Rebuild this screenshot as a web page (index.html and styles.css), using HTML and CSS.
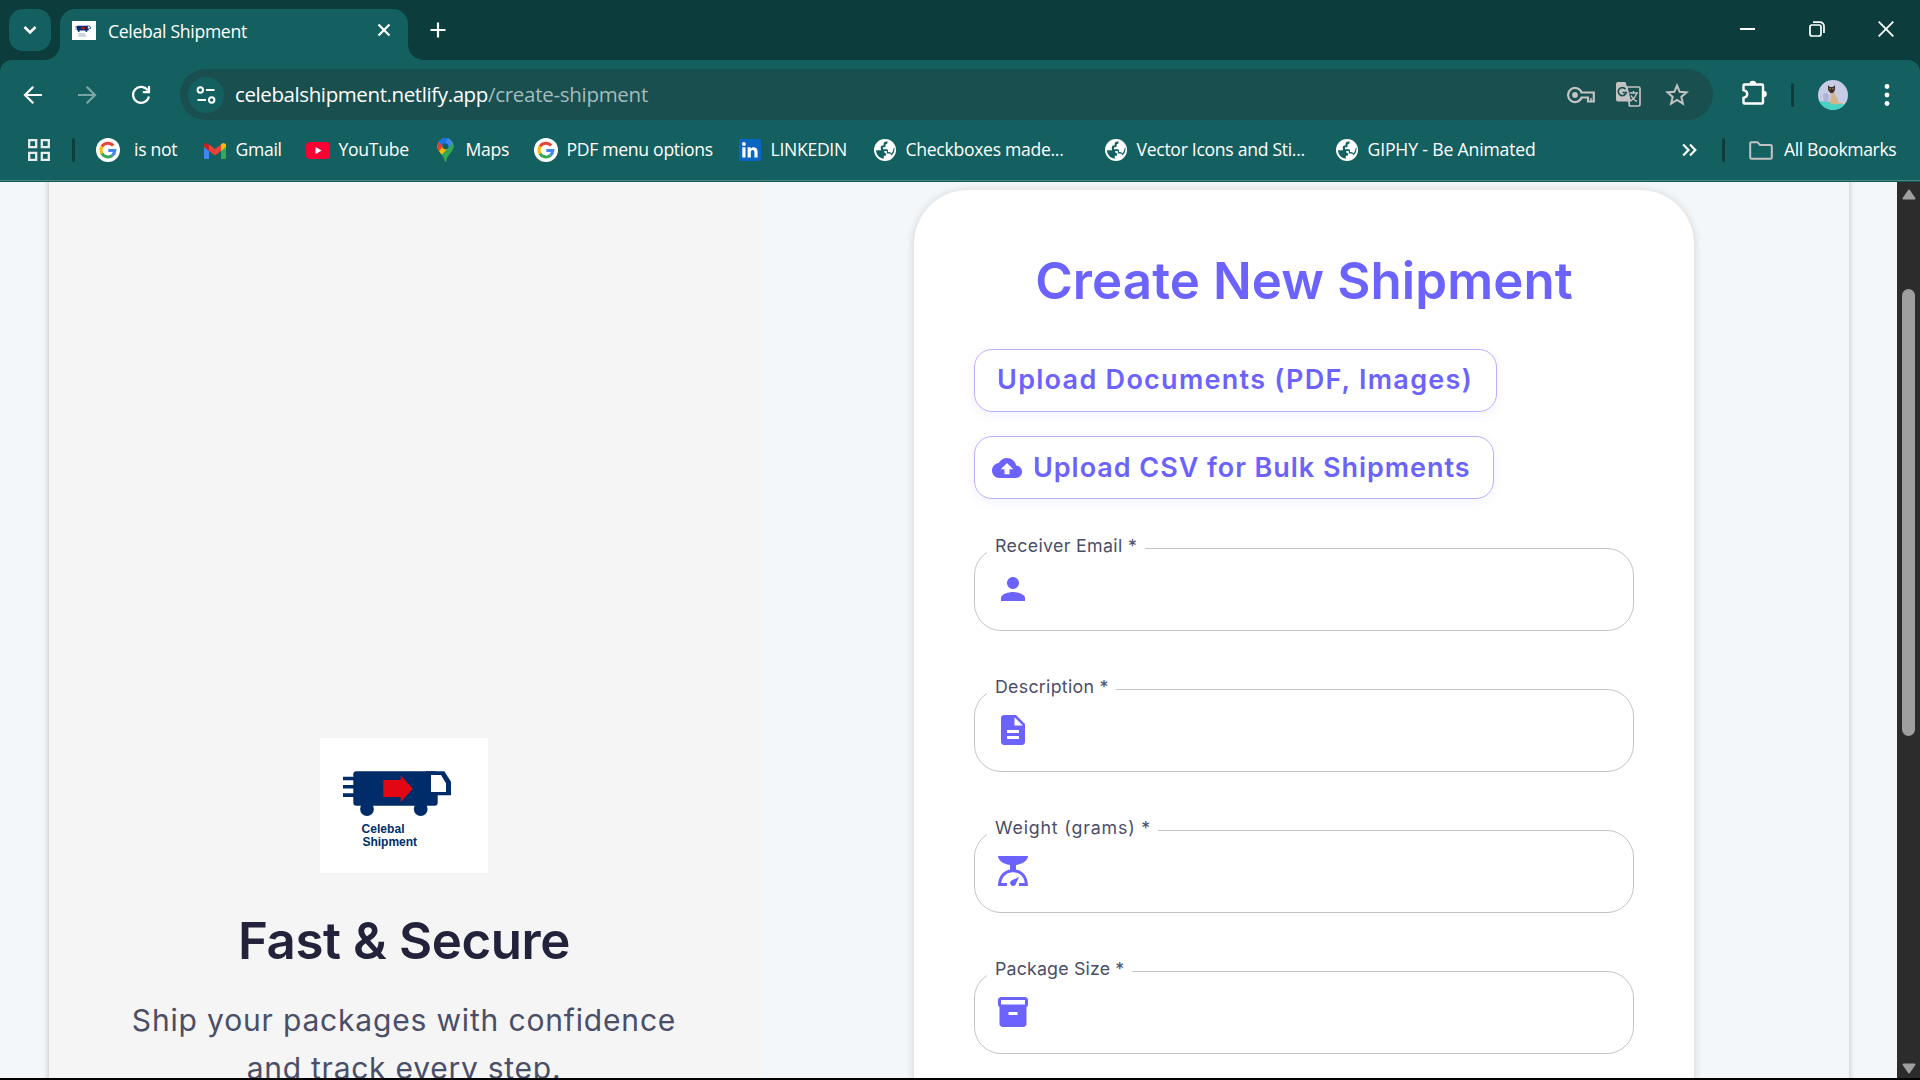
FILE: index.html
```
<!DOCTYPE html>
<html lang="en">
<head>
<meta charset="utf-8">
<title>Celebal Shipment</title>
<link rel="stylesheet" href="styles.css">
</head>
<body>
<svg class="defs" width="0" height="0" aria-hidden="true">
  <symbol id="truck" viewBox="0 0 168 135">
    <g fill="#002d6a">
      <path d="M23 38.7h11v3.5H23zM23 47h11v3.6H23zM23 55.3h11v3.6H23z"/>
      <rect x="33.3" y="33.3" width="84.4" height="34.4" rx="3"/>
      <circle cx="47" cy="71" r="6.9"/><circle cx="100.7" cy="71" r="6.9"/>
      <path d="M106 33.3h18.3l6.7 10.4v13.6h-25z"/>
    </g>
    <path fill="#fff" d="M111 37h10l5 8.3V54h-15z"/>
    <path fill="#e30613" d="M63.3 42h17.4v-4.7l12 13.4-12 13.6V59H63.3z"/>
  </symbol>
  <symbol id="google" viewBox="0 0 24 24">
    <circle cx="12" cy="12" r="12" fill="#fff"/>
    <g fill="none" stroke-width="3">
      <path stroke="#ea4335" d="M17.2 7.6A7 7 0 0 0 5.9 8.6"/>
      <path stroke="#fbbc05" d="M5.9 8.6a7 7 0 0 0 0 6.8"/>
      <path stroke="#34a853" d="M5.9 15.4a7 7 0 0 0 10.4 2.1"/>
      <path stroke="#4285f4" d="M16.3 17.5a7 7 0 0 0 2.6-5.1H12.3"/>
    </g>
  </symbol>
  <symbol id="globe" viewBox="0 0 22 22">
    <circle cx="11" cy="11" r="11" fill="#fff"/>
    <path fill="#146060" d="M13.500 2.300q.5 2.700-2 3.200v2q0 .8-1 .8H9v1.900h3.600q1.400 0 1.400 1.400v1.600q2.400-.4 3.400 1.300 2.200-2.400 2.200-5.200l1.200-.3-1 4.500-2.200 3q-.6-1.800-2.200-1.900h-2.600v-2.700H8.500q-1.700 0-1.700-1.600V8q0-1.500 1.500-1.500h1.300V4.700q0-2 2-2zM2 11.200h5.700q2.900 0 2.900 2.700h1.300v2.800H9.800v3q-5.600-.6-7.400-5.900z"/>
  </symbol>
</svg>

<header class="titlebar">
  <div class="tab-search"><svg width="14" height="10" viewBox="0 0 14 10"><path d="M1.5 2l5.500 5.500L12.500 2" fill="none" stroke="#fff" stroke-width="2.500"/></svg></div>
  <div class="tab">
    <span class="favicon"><svg width="24" height="19" viewBox="0 0 168 135"><use href="#truck" width="168" height="135"/><path d="M44 92h48M44 106h56" stroke="#8a97b5" stroke-width="6"/></svg></span>
    <span class="tab-title">Celebal Shipment</span>
    <svg width="14" height="14" viewBox="0 0 14 14"><path d="M1.500 1.500l11 11M12.500 1.500l-11 11" stroke="#fff" stroke-width="2.200"/></svg>
  </div>
  <svg class="new-tab" width="16" height="16" viewBox="0 0 16 16"><path d="M8 .5v15M.5 8h15" stroke="#fff" stroke-width="2.200"/></svg>
  <div class="window-controls">
    <svg width="16" height="16" viewBox="0 0 16 16"><path d="M0 8h15" stroke="#fff" stroke-width="2"/></svg>
    <svg width="16" height="16" viewBox="0 0 16 16" fill="none" stroke="#fff" stroke-width="1.700"><rect x="1" y="4" width="11" height="11" rx="2"/><path d="M4 1.200h7a4 4 0 0 1 4 4V12"/></svg>
    <svg width="16" height="16" viewBox="0 0 16 16"><path d="M.7.7l14.600 14.600M15.300.7L.7 15.300" stroke="#fff" stroke-width="1.800"/></svg>
  </div>
</header>

<div class="chrome">
  <nav class="toolbar">
    <div class="nav-buttons">
      <svg width="20" height="20" viewBox="0 0 20 20" fill="none" stroke="#fff" stroke-width="2.200"><path d="M19 10H2.500M10.300 1.700L2 10l8.300 8.300"/></svg>
      <svg width="20" height="20" viewBox="0 0 20 20" fill="none" stroke="#7ba5a4" stroke-width="2.200"><path d="M1 10h16.500M9.700 1.700L18 10l-8.300 8.300"/></svg>
      <svg width="20" height="20" viewBox="0 0 20 20" fill="none" stroke="#fff" stroke-width="2.200"><path d="M16.800 5.500A8 8 0 1 0 17.900 11.500M18 1v6.200h-6.200"/></svg>
    </div>
    <div class="address">
      <span class="site-info"><svg width="20" height="18" viewBox="0 0 20 18" fill="none" stroke="#fff" stroke-width="2"><circle cx="4.300" cy="4" r="2.700"/><path d="M10 4h8.500M1.500 14H10"/><circle cx="15.700" cy="14" r="2.700"/></svg></span>
      <span class="url">celebalshipment.netlify.app<span class="path">/create-shipment</span></span>
      <svg width="28" height="18" viewBox="0 0 28 18" fill="none" stroke="#c3c3c3" stroke-width="2.200"><path d="M14.600 6.500H26.800v9H21v-4h-6.400A7 7 0 1 1 14.600 6.500z"/><circle cx="8" cy="9" r="2.900" fill="#c3c3c3" stroke="none"/><path d="M24 15v-3" stroke-width="1.500"/></svg>
      <svg class="translate" width="25" height="25" viewBox="0 0 25 25"><path d="M11 5h11.500A1.500 1.500 0 0 1 24 6.500v16a1.500 1.500 0 0 1-1.500 1.500h-9z" fill="none" stroke="#c3c3c3" stroke-width="1.700"/><path d="M2 0h7.500l5.800 19.500H2a2 2 0 0 1-2-2V2a2 2 0 0 1 2-2z" fill="#c3c3c3"/><path d="M9.500 7.200A4 4 0 1 0 10.200 10.500H6.500" fill="none" stroke="#1a4f50" stroke-width="1.700"/><path d="M13.500 11h8.500M17.500 9v2M20.500 11c-.5 3.500-3 6-6 8M15 13.500c1.200 2.500 3 4.500 5.800 6" fill="none" stroke="#c3c3c3" stroke-width="1.500"/></svg>
      <svg class="star" width="24" height="23" viewBox="0 0 24 23"><path d="M12 2.500l2.700 6.300 6.800.6-5.200 4.500 1.600 6.700-5.900-3.600-5.900 3.600 1.600-6.700-5.200-4.500 6.800-.6z" fill="none" stroke="#c3c3c3" stroke-width="2"/></svg>
    </div>
    <svg class="puzzle" width="26" height="26" viewBox="0 0 26 26"><path d="M3.500 4.500H21q1 0 1 1V22.500q0 1-1 1H3.500q-1 0-1-1v-4.700c5-1.200 5-6.400 0-7.600V5.500q0-1 1-1z" fill="none" stroke="#fff" stroke-width="2.400"/><path d="M8.500 4a3.300 3.300 0 0 1 6.600 0zM22.500 10.700a3.300 3.300 0 0 1 0 6.600z" fill="#fff"/></svg>
    <span class="rule"></span>
    <svg class="avatar" width="30" height="30" viewBox="0 0 30 30"><clipPath id="round"><circle cx="15" cy="15" r="15"/></clipPath><g clip-path="url(#round)"><path fill="#c7cbe6" d="M0 0h30v30H0z"/><path fill="#aeb3d2" d="M5 15q4-5 6 2l-1 5H6z"/><path fill="#46d3c4" d="M0 21l12 1 18 3v5H0z"/><path fill="#d3b58b" d="M12.500 11h3.500q.5 4 2.500 6t2 5.500l5 .8-1 1H12.500q-1-4 .5-7z"/><path fill="#3b3029" d="M10 5l1.800 2h3.200L17 5v5l-2 3h-2.500L10 10z"/><path fill="#c69d69" d="M11.500 8h1v1.500h-1zM14.500 8h1v1.500h-1z"/></g></svg>
    <svg class="menu" width="6" height="24" viewBox="0 0 6 24" fill="#fff"><circle cx="3" cy="3.500" r="2.400"/><circle cx="3" cy="12" r="2.400"/><circle cx="3" cy="20.500" r="2.400"/></svg>
  </nav>
  <nav class="bookmarks">
    <svg class="apps" width="22" height="22" viewBox="0 0 22 22" fill="none" stroke="#e6eded" stroke-width="2.300"><path d="M1.200 1.200h7v7h-7zM13.800 1.200h7v7h-7zM1.200 13.800h7v7h-7zM13.800 13.800h7v7h-7z"/></svg>
    <span class="rule"></span>
    <div class="bookmark-list">
      <a class="first"><i><svg width="24" height="24"><use href="#google"/></svg></i><span>is not</span></a>
      <a><i><svg width="22" height="17" viewBox="0 0 22 17"><path fill="#4285f4" d="M0 4l5 4v9H1.500Q0 17 0 15.500z"/><path fill="#34a853" d="M22 4l-5 4v9h3.500q1.500 0 1.500-1.500z"/><path fill="#fbbc04" d="M17 2.500q2.500-3 5 0V5l-5 4z"/><path fill="#ea4335" d="M5 2.500l6 4.600 6-4.600V9l-6 4.500L5 9z"/><path fill="#c5221f" d="M5 2.500q-2.500-3-5 0V5l5 4z"/></svg></i><span>Gmail</span></a>
      <a><i><svg width="24" height="17" viewBox="0 0 24 17"><rect width="24" height="17" rx="4" fill="#ff0033"/><path fill="#fff" d="M9.500 5l6.300 3.500-6.300 3.500z"/></svg></i><span>YouTube</span></a>
      <a><i><svg width="17" height="24" viewBox="0 0 17 24"><clipPath id="pin"><path d="M8.500 0A8.300 8.300 0 0 0 .2 8.300c0 5 6.800 8.500 7.500 14.700q.8 1.800 1.600 0c.7-6.200 7.500-9.700 7.500-14.700A8.300 8.300 0 0 0 8.500 0z"/></clipPath><g clip-path="url(#pin)"><path fill="#34a853" d="M0 0h17v24H0z"/><path fill="#fbbc04" d="M0 8l8 1 3 1-8.500 9L0 14z"/><path fill="#ea4335" d="M0 2.500l7 4.500-5.500 7L0 12z"/><path fill="#1a73e8" d="M1.500 3.500L5 0h9L5.500 8z"/><path fill="#4285f4" d="M11 0l5 5-6.500 7-3-3z"/></g><circle cx="8.500" cy="8.200" r="3" fill="#146060"/></svg></i><span>Maps</span></a>
      <a><i><svg width="24" height="24"><use href="#google"/></svg></i><span>PDF menu options</span></a>
      <a><i><svg width="22" height="22" viewBox="0 0 22 22"><rect width="22" height="22" rx="1.500" fill="#0a66c2"/><g fill="#fff"><circle cx="4.900" cy="5" r="1.900"/><path d="M3.300 8.300h3.200v10.200H3.300zM8.600 8.300h3v1.500c1.500-2.600 7-2.500 7 2.800v5.900h-3.200v-5.200c0-3.300-3.600-3-3.600 0v5.200H8.600z"/></g></svg></i><span>LINKEDIN</span></a>
      <a><i><svg width="22" height="22"><use href="#globe"/></svg></i><span>Checkboxes made...</span></a>
      <a><i><svg width="22" height="22"><use href="#globe"/></svg></i><span>Vector Icons and Sti...</span></a>
      <a class="last"><i><svg width="22" height="22"><use href="#globe"/></svg></i><span>GIPHY - Be Animated</span></a>
    </div>
    <svg class="more" width="15" height="14" viewBox="0 0 15 14" fill="none" stroke="#fff" stroke-width="2.200"><path d="M1.200 1.500L6.500 7l-5.300 5.500M8 1.500L13.300 7 8 12.500"/></svg>
    <span class="rule"></span>
    <svg class="folder" width="24" height="19" viewBox="0 0 24 19"><path d="M2.500 1.200h6L11 4h10.500q1.300 0 1.300 1.300v11.200q0 1.300-1.300 1.300h-19q-1.300 0-1.300-1.300v-14q0-1.300 1.300-1.300z" fill="none" stroke="#c3c3c3" stroke-width="2"/></svg>
    <span class="all">All Bookmarks</span>
  </nav>
</div>

<div class="viewport">
  <main class="page">
    <div class="shell">
      <section class="promo">
        <div class="logo">
          <svg width="168" height="135"><use href="#truck"/><g class="logo-text"><text x="41.500" y="95.200" textLength="43">Celebal</text><text x="42.500" y="108.300" textLength="54.500">Shipment</text></g></svg>
        </div>
        <h2>Fast &amp; Secure</h2>
        <p>Ship your packages with confidence<br><span class="line-two">and track every step.</span></p>
      </section>
      <section class="form-side">
        <form class="card">
          <h1>Create New Shipment</h1>
          <button type="button" class="upload documents">Upload Documents (PDF, Images)</button>
          <button type="button" class="upload csv"><svg width="30" height="30" viewBox="0 0 24 24"><path d="M19.350 10.040C18.670 6.590 15.640 4 12 4 9.110 4 6.600 5.640 5.350 8.040 2.340 8.360 0 10.910 0 14c0 3.310 2.690 6 6 6h13c2.760 0 5-2.240 5-5 0-2.640-2.050-4.780-4.650-4.960zM14 13v4h-4v-4H7l5-5 5 5h-3z"/></svg>Upload CSV for Bulk Shipments</button>
          <fieldset class="email"><legend>Receiver Email *</legend>
            <svg width="36" height="36" viewBox="0 0 24 24"><path d="M12 12c2.210 0 4-1.790 4-4s-1.790-4-4-4-4 1.790-4 4 1.790 4 4 4zm0 2c-2.670 0-8 1.340-8 4v2h16v-2c0-2.660-5.330-4-8-4z"/></svg></fieldset>
          <fieldset class="description"><legend>Description *</legend>
            <svg width="36" height="36" viewBox="0 0 24 24"><path d="M14 2H6c-1.100 0-1.990.9-1.990 2L4 20c0 1.100.89 2 1.990 2H18c1.100 0 2-.9 2-2V8l-6-6zm2 16H8v-2h8v2zm0-4H8v-2h8v2zm-3-5V3.500L18.500 9H13z"/></svg></fieldset>
          <fieldset class="weight"><legend>Weight (grams) *</legend>
            <svg width="36" height="36" viewBox="0 0 24 24"><path d="M14 11V8c4.560-.58 8-3.100 8-6H2c0 2.900 3.440 5.420 8 6v3c-3.680.73-8 3.610-8 11h6v-2H4.130c.93-6.830 6.650-7.200 7.870-7.200s6.940.37 7.870 7.200H16v2h6c0-7.390-4.320-10.270-8-11z"/><path d="M16 16l-2.150 4.800a2 2 0 1 1-2.650-2.650z"/></svg></fieldset>
          <fieldset class="size"><legend>Package Size *</legend>
            <svg width="36" height="36" viewBox="0 0 24 24"><path d="M20 2H4c-1 0-2 .9-2 2v3.010c0 .72.430 1.340 1 1.690V20c0 1.100 1.100 2 2 2h14c.9 0 2-.9 2-2V8.700c.57-.35 1-.97 1-1.690V4c0-1.100-1-2-2-2zm-5 12H9v-2h6v2zm5-7H4V4h16v3z"/></svg></fieldset>
        </form>
      </section>
    </div>
  </main>
  <aside class="scrollbar">
    <svg width="14" height="11" viewBox="0 0 14 11"><path d="M7 1.500L12.500 9.500h-11z" fill="#9f9f9f" stroke="#9f9f9f" stroke-width="2" stroke-linejoin="round"/></svg>
    <span class="thumb"></span>
    <svg width="14" height="11" viewBox="0 0 14 11"><path d="M7 9.500L12.500 1.500h-11z" fill="#9f9f9f" stroke="#9f9f9f" stroke-width="2" stroke-linejoin="round"/></svg>
  </aside>
</div>
</body>
</html>
```
FILE: styles.css
```
* { box-sizing: border-box; }
html, body { margin: 0; height: 100%; overflow: hidden; }
body {
  display: flex;
  flex-direction: column;
  width: 1920px;
  height: 1080px;
  background: #000;
  font-family: "Inter", sans-serif;
}
svg { display: block; flex: none; }
.defs { position: absolute; }

/* Browser frame */
.titlebar, .chrome { font-family: "Segoe UI", "Open Sans", sans-serif; font-size: 17.600px; letter-spacing: -.3px; color: #fff; }
.titlebar { flex: none; display: flex; height: 60px; padding: 9px 26px 0 9px; background: #0c3d3c; }
.tab-search { display: grid; place-items: center; width: 42px; height: 42px; border-radius: 14px; background: #146060; }
.tab {
  position: relative;
  display: flex;
  align-items: center;
  width: 348px;
  height: 51px;
  margin-left: 9px;
  padding: 0 17px 9px 12px;
  border-radius: 15px 15px 0 0;
  background: #146060;
}
.tab::before, .tab::after { content: ""; position: absolute; bottom: 0; width: 15px; height: 15px; }
.tab::before { left: -15px; background: radial-gradient(circle at 0 0, transparent 14.500px, #146060 15px); }
.tab::after { right: -15px; background: radial-gradient(circle at 100% 0, transparent 14.500px, #146060 15px); }
.favicon { width: 24px; height: 19px; margin-right: 12px; background: #fff; }
.tab-title { flex: 1; padding-top: 2px; }
.new-tab { margin: 12.500px 0 0 22px; }
.window-controls { display: flex; gap: 53px; margin: 12px 0 0 auto; }

.chrome {
  flex: none;
  height: 122px;
  border-bottom: 1px solid #0f5a58;
  background: linear-gradient(#4c8684, #4c8684) 0 100% / 100% 1px no-repeat #146060;
  box-shadow: 0 -12px #0c3d3c;
  border-radius: 12px 12px 0 0;
}
.titlebar { position: relative; z-index: 1; }
.chrome { position: relative; }
.toolbar { display: flex; align-items: center; height: 69px; padding: 9px 30px 9px 23px; }
.nav-buttons { display: flex; gap: 34px; width: 157px; }
.address { display: flex; align-items: center; width: 1533px; height: 51px; padding: 0 24px 0 8px; border-radius: 26px; background: #1a4f50; }
.site-info { display: grid; place-items: center; width: 36px; height: 36px; border-radius: 50%; background: #146060; }
.url { flex: 1; padding: 0 0 2px 11px; font-size: 20.500px; letter-spacing: -.4px; }
.path { color: #a5bcbc; letter-spacing: -.28px; }
.translate { margin-left: 21px; }
.star { margin-left: 24px; }
.puzzle { margin: 0 24px 3px 28px; }
.rule { flex: none; width: 3px; height: 24px; border-radius: 2px; background: #0c3d3c; }
.avatar { margin-left: 24px; }
.menu { margin-left: auto; }
.bookmarks { display: flex; align-items: center; height: 42px; padding: 0 20px 0 28px; white-space: nowrap; }
.apps { margin-right: 22px; }
.bookmark-list { display: grid; grid-template-columns: 101px 103px 127px 101px 204px 135px 231px 231px 1fr; width: 1580px; margin-left: 27px; }
.bookmark-list a { display: flex; align-items: center; gap: 8.500px; }
.bookmark-list .first { gap: 14px; margin-left: -6px; }
.bookmark-list .last { letter-spacing: -.15px; }
.bookmark-list i { display: grid; place-items: center; width: 24px; height: 24px; }
.bookmark-list span, .all { padding-bottom: 2px; }
.more { margin-right: 25px; }
.folder { margin: 0 11px 0 24px; }
.all { letter-spacing: -.38px; }

/* Web page */
.viewport { display: flex; height: 896px; overflow: hidden; background: #f3f7fa; }
.page { width: 1897px; padding: 0 48px 0 49px; }
.shell { display: flex; width: 1800px; height: 1300px; margin-top: -60px; padding-top: 60px; box-shadow: 0 0 6px rgba(0, 0, 0, .24); }
.promo { display: flex; flex-direction: column; align-items: center; width: 711px; padding: 556px 1px 0 0; background: #f5f5f5; text-align: center; }
.logo { width: 168px; margin-right: 1px; background: #fff; }
.logo-text { fill: #002d6a; font: bold 12px "Liberation Sans", Arial, sans-serif; }
.promo h2 { margin: 38px 0 25px; color: #22223b; font-size: 51px; font-weight: 600; line-height: 60px; letter-spacing: -.4px; }
.promo p { margin: 0; color: #4a4e69; font-size: 30px; line-height: 48px; letter-spacing: .83px; white-space: nowrap; }
.line-two { letter-spacing: .75px; }
.form-side { width: 1089px; padding: 8px 155px 0 154px; }
.card { height: 1240px; padding: 61px 60px 0; border-radius: 54px; background: #fff; box-shadow: 0 1px 8px rgba(0, 0, 0, .16); }
.card h1 { margin: 0 0 38px; color: #6c63ff; font-size: 51px; font-weight: 600; line-height: 60px; letter-spacing: .1px; text-align: center; white-space: nowrap; }
.upload {
  display: flex;
  align-items: center;
  height: 63px;
  margin: 0 0 24px;
  padding: 0 0 2px 22px;
  border: 1px solid #b5b1ff;
  border-radius: 18px;
  background: #fff;
  box-shadow: 0 3px 12px rgba(108, 99, 255, .08);
  color: #6c63ff;
  font: 600 27px "Inter", sans-serif;
  white-space: nowrap;
}
.documents { width: 523px; letter-spacing: 1.280px; }
.csv { width: 520px; margin-bottom: 39px; padding: 0 0 0 17px; letter-spacing: .95px; }
.upload svg { margin: 1px 11px 0 0; fill: #6c63ff; }
fieldset { height: 93px; min-width: 0; margin: 0 0 48px; padding: 0 12px; border: 1px solid #c4c4c4; border-radius: 27px; }
fieldset svg { margin: 13px 0 0 8px; fill: #6c63ff; }
legend { height: 20px; padding: 0 0 4px 8px; color: #4a4e69; font-size: 17.800px; line-height: 16px; white-space: nowrap; }
.email legend { width: 158px; letter-spacing: .33px; }
.description legend { width: 129px; letter-spacing: .27px; }
.weight legend { width: 171px; letter-spacing: .83px; }
.size legend { width: 145px; letter-spacing: .17px; }

.scrollbar { display: flex; flex-direction: column; align-items: center; width: 23px; padding: 7px 0 4px; background: #2c2c2c; }
.thumb { width: 13px; height: 447px; margin: 89px 0 auto; border-radius: 7px; background: #9f9f9f; }
```
